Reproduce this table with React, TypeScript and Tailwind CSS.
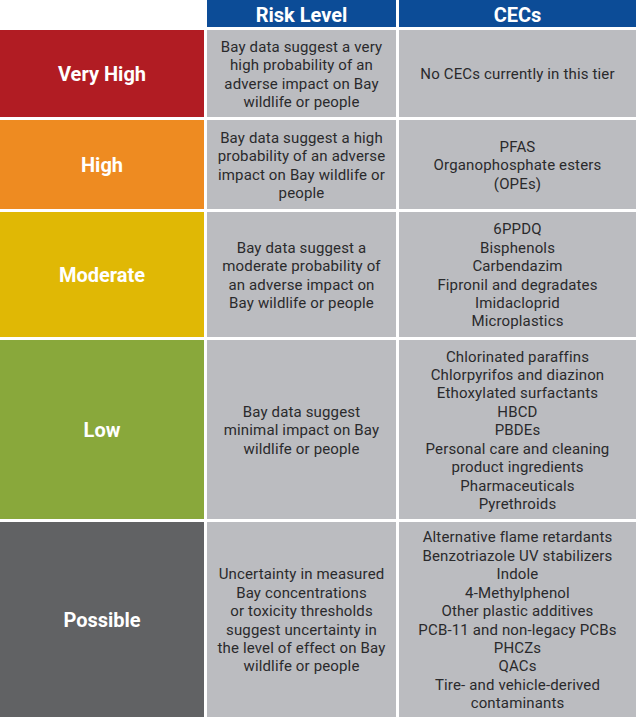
import React from "react";

type Row = {
  label: string;
  color: string;
  h: string;
  risk: string[];
  cecs: string[];
};

const rows: Row[] = [
  {
    label: "Very High",
    color: "bg-[#b11c23]",
    h: "h-[87px]",
    risk: ["Bay data suggest a very", "high probability of an", "adverse impact on Bay", "wildlife or people"],
    cecs: ["No CECs currently in this tier"],
  },
  {
    label: "High",
    color: "bg-[#ee8b21]",
    h: "h-[89px]",
    risk: ["Bay data suggest a high", "probability of an adverse", "impact on Bay wildlife or", "people"],
    cecs: ["PFAS", "Organophosphate esters", "(OPEs)"],
  },
  {
    label: "Moderate",
    color: "bg-[#e0b805]",
    h: "h-[125px]",
    risk: ["Bay data suggest a", "moderate probability of", "an adverse impact on", "Bay wildlife or people"],
    cecs: ["6PPDQ", "Bisphenols", "Carbendazim", "Fipronil and degradates", "Imidacloprid", "Microplastics"],
  },
  {
    label: "Low",
    color: "bg-[#89a83b]",
    h: "h-[179px]",
    risk: ["Bay data suggest", "minimal impact on Bay", "wildlife or people"],
    cecs: [
      "Chlorinated paraffins",
      "Chlorpyrifos and diazinon",
      "Ethoxylated surfactants",
      "HBCD",
      "PBDEs",
      "Personal care and cleaning",
      "product ingredients",
      "Pharmaceuticals",
      "Pyrethroids",
    ],
  },
  {
    label: "Possible",
    color: "bg-[#616264]",
    h: "h-[195px]",
    risk: [
      "Uncertainty in measured",
      "Bay concentrations",
      "or toxicity thresholds",
      "suggest uncertainty in",
      "the level of effect on Bay",
      "wildlife or people",
    ],
    cecs: [
      "Alternative flame retardants",
      "Benzotriazole UV stabilizers",
      "Indole",
      "4-Methylphenol",
      "Other plastic additives",
      "PCB-11 and non-legacy PCBs",
      "PHCZs",
      "QACs",
      "Tire- and vehicle-derived",
      "contaminants",
    ],
  },
];

function Lines({ lines }: { lines: string[] }) {
  return (
    <div className="text-center text-[15px] leading-[18.4px] tracking-[0.15px] text-[#2a2a2c] pt-[2px]">
      {lines.map((l, i) => (
        <div key={i} className="whitespace-nowrap">
          {l}
        </div>
      ))}
    </div>
  );
}

export default function App() {
  return (
    <div
      className="w-[636px] h-[717px] overflow-hidden bg-white flex flex-col gap-[3px]"
      style={{ fontFamily: "Roboto, 'Liberation Sans', sans-serif" }}
    >
      <div className="flex gap-[3px] h-[27px] shrink-0">
        <div className="w-[204px] bg-white" />
        <div className="w-[189px] bg-[#0c4c97] flex items-start justify-center text-white font-bold text-[20px] leading-normal">
          Risk Level
        </div>
        <div className="flex-1 bg-[#0c4c97] flex items-start justify-center text-white font-bold text-[20px] leading-normal">
          CECs
        </div>
      </div>
      {rows.map((r) => (
        <div key={r.label} className={`flex gap-[3px] shrink-0 ${r.h}`}>
          <div className={`w-[204px] ${r.color} flex items-center justify-center text-white font-bold text-[20px]`}>
            {r.label}
          </div>
          <div className="w-[189px] bg-[#bbbcc0] flex items-center justify-center">
            <Lines lines={r.risk} />
          </div>
          <div className="flex-1 bg-[#bbbcc0] flex items-center justify-center">
            <Lines lines={r.cecs} />
          </div>
        </div>
      ))}
    </div>
  );
}
